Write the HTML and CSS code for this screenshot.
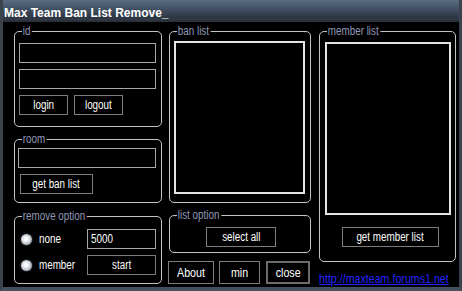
FILE: index.html
```html
<!DOCTYPE html>
<html>
<head>
<meta charset="utf-8">
<link rel="stylesheet" href="styles.css">
</head>
<body>
<div class="window">
  <div class="titlebar">Max Team Ban List Remove_</div>
  <div class="content">
    <div class="col col-left">
      <div class="group g-id">
        <span class="legend">id</span>
        <div class="field"></div>
        <div class="field"></div>
        <div class="btn-row">
          <div class="btn b-login"><span class="nt">login</span></div>
          <div class="btn b-login"><span class="nt">logout</span></div>
        </div>
      </div>
      <div class="group g-room">
        <span class="legend">room</span>
        <div class="field f-room"></div>
        <div class="btn b-getban"><span class="nt">get ban list</span></div>
      </div>
      <div class="group g-remove">
        <span class="legend">remove option</span>
        <div class="opt-grid">
          <div class="opt"><span class="radio"></span><span class="nt left">none</span></div>
          <div class="field f-num"><span class="nt left">5000</span></div>
          <div class="opt"><span class="radio"></span><span class="nt left">member</span></div>
          <div class="btn b-start"><span class="nt">start</span></div>
        </div>
      </div>
    </div>
    <div class="col col-mid">
      <div class="group g-ban">
        <span class="legend">ban list</span>
        <div class="listbox lb-ban"></div>
      </div>
      <div class="group g-list">
        <span class="legend">list option</span>
        <div class="btn b-select"><span class="nt">select all</span></div>
      </div>
      <div class="btnbar">
        <div class="btn b-about"><span class="nt">About</span></div>
        <div class="btn b-min"><span class="nt">min</span></div>
        <div class="btn b-close"><span class="nt">close</span></div>
      </div>
    </div>
    <div class="col col-right">
      <div class="group g-member">
        <span class="legend">member list</span>
        <div class="listbox lb-member"></div>
        <div class="btn b-getmember"><span class="nt">get member list</span></div>
      </div>
      <a class="link" href="#">http://maxteam.forums1.net</a>
    </div>
  </div>
</div>
</body>
</html>
```
FILE: styles.css
```css
* { box-sizing: border-box; }
html, body { margin: 0; padding: 0; background: #000; }
body {
  font-family: "Liberation Sans", Arial, sans-serif;
  font-size: 12px;
  color: #fff;
}
.nt {
  display: inline-block;
  transform: scaleX(0.82);
  transform-origin: center;
  white-space: nowrap;
}
.nt.left { transform-origin: left center; }
.window {
  width: 462px;
  height: 291px;
  background: #000;
  border-left: 3px solid #3a424c;
  border-right: 3px solid #3a424c;
  border-bottom: 4px solid #44505c;
  display: flex;
  flex-direction: column;
  overflow: hidden;
}
.titlebar {
  height: 22px;
  margin: 0 -3px;
  padding: 4px 0 0 4px;
  line-height: 18px;
  font-weight: bold;
  font-size: 12px;
  color: #fff;
  background: linear-gradient(to bottom, #5a6d82 0%, #435366 40%, #2c3541 90%, #333c47 100%);
  border-bottom: 2px solid #2a3139;
  white-space: nowrap;
}
.content {
  display: flex;
  padding: 9px 0 0 11px;
}
.col { display: flex; flex-direction: column; }
.col-left { width: 148px; }
.col-mid { width: 142px; margin-left: 7px; }
.col-right { width: 137px; margin-left: 8px; }

.group {
  position: relative;
  border: 1px solid #c4c4c4;
  border-radius: 5px;
}
.legend {
  position: absolute;
  top: -8px;
  left: 7px;
  padding: 0 2px 0 1px;
  line-height: 14px;
  background: #000;
  color: #9098b8;
  white-space: nowrap;
  transform: scaleX(0.82);
  transform-origin: left center;
}
.field {
  height: 20px;
  border: 1px solid #a8a8a8;
  background: #000;
  color: #fff;
  line-height: 18px;
  padding-left: 2px;
}
.btn {
  height: 20px;
  border: 1px solid #7c7c7c;
  background: #000;
  color: #fff;
  text-align: center;
  line-height: 18px;
  white-space: nowrap;
}
.listbox {
  border: 2px solid #e4e4e4;
  background: #000;
}

.g-id {
  height: 96px;
  padding: 11px 0 0 4px;
  display: flex;
  flex-direction: column;
  gap: 6px;
}
.g-id .field { width: 137px; }
.btn-row { display: flex; gap: 6px; }
.b-login { width: 49px; }

.g-room {
  height: 64px;
  margin-top: 12px;
  padding: 8px 0 0 3px;
}
.f-room { width: 138px; }
.b-getban { width: 73px; margin: 6px 0 0 2px; }

.g-remove {
  height: 68px;
  margin-top: 13px;
  padding: 12px 0 0 6px;
}
.opt-grid {
  display: grid;
  grid-template-columns: 66px 69px;
  grid-auto-rows: 20px;
  row-gap: 6px;
}
.opt { display: flex; align-items: center; }
.radio {
  flex: none;
  width: 11px;
  height: 11px;
  border-radius: 50%;
  margin-right: 7px;
  background: radial-gradient(circle at 45% 45%, #ffffff 0, #f4f6fa 25%, #b8bec8 60%, #5c6470 100%);
  box-shadow: 0 0 2px rgba(200, 210, 225, 0.5);
}
.f-num { padding-left: 3px; }

.g-ban {
  height: 172px;
  padding: 9px 0 0 4px;
}
.lb-ban { width: 131px; height: 153px; }
.g-list {
  height: 38px;
  margin-top: 12px;
  padding: 11px 0 0 36px;
}
.b-select { width: 70px; }
.btnbar { display: flex; margin-top: 8px; }
.btnbar .btn { height: 23px; line-height: 21px; font-size: 13px; }
.b-about { width: 46px; margin-left: -1px; }
.b-min { width: 41px; margin-left: 5px; }
.btnbar .b-close { width: 44px; margin-left: 6px; border: 2px solid #6c6c6c; line-height: 19px; }

.g-member {
  height: 231px;
  padding: 10px 0 0 5px;
}
.lb-member { width: 126px; height: 173px; }
.b-getmember { width: 97px; margin: 12px 0 0 17px; }
.link {
  align-self: flex-start;
  margin-top: 9px;
  line-height: 15px;
  font-size: 13px;
  color: #2424ff;
  text-decoration: underline;
  white-space: nowrap;
  transform: scaleX(0.82);
  transform-origin: left center;
}
```
